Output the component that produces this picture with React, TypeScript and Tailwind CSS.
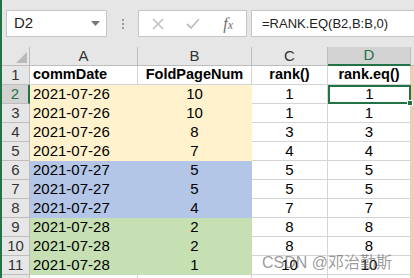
import React from "react";

type Row = { n: number; date: string; b: string; c: string; d: string; fill: string };

const rows: Row[] = [
  { n: 2, date: "2021-07-26", b: "10", c: "1", d: "1", fill: "bg-[#fff2cc] border-[#fff2cc]" },
  { n: 3, date: "2021-07-26", b: "10", c: "1", d: "1", fill: "bg-[#fff2cc] border-[#fff2cc]" },
  { n: 4, date: "2021-07-26", b: "8", c: "3", d: "3", fill: "bg-[#fff2cc] border-[#fff2cc]" },
  { n: 5, date: "2021-07-26", b: "7", c: "4", d: "4", fill: "bg-[#fff2cc] border-[#fff2cc]" },
  { n: 6, date: "2021-07-27", b: "5", c: "5", d: "5", fill: "bg-[#b4c6e7] border-[#b4c6e7]" },
  { n: 7, date: "2021-07-27", b: "5", c: "5", d: "5", fill: "bg-[#b4c6e7] border-[#b4c6e7]" },
  { n: 8, date: "2021-07-27", b: "4", c: "7", d: "7", fill: "bg-[#b4c6e7] border-[#b4c6e7]" },
  { n: 9, date: "2021-07-28", b: "2", c: "8", d: "8", fill: "bg-[#c6e0b4] border-[#c6e0b4]" },
  { n: 10, date: "2021-07-28", b: "2", c: "8", d: "8", fill: "bg-[#c6e0b4] border-[#c6e0b4]" },
  { n: 11, date: "2021-07-28", b: "1", c: "10", d: "10", fill: "bg-[#c6e0b4] border-[#c6e0b4]" },
];

const font = { fontFamily: '"Liberation Sans", Arial, sans-serif' };

export default function App() {
  return (
    <div className="relative flex h-[278px] w-[414px] overflow-hidden bg-white text-black" style={font}>
      <div className="w-[2px] shrink-0 bg-[#217346]" />
      <div className="flex min-w-0 flex-1 flex-col">
        {/* toolbar */}
        <div className="flex h-[47px] shrink-0 items-start gap-0 bg-[#e6e6e6] pt-[10px]">
          <div className="ml-[4px] flex h-[27px] w-[101px] items-center justify-between border border-[#c6c6c6] bg-white pl-[7px] pr-[6px] text-[15px] text-[#222]">
            <span>D2</span>
            <svg width="9" height="5" viewBox="0 0 9 5"><path d="M0 0h9L4.5 5z" fill="#777" /></svg>
          </div>
          <div className="flex h-[27px] w-[31px] flex-col items-center justify-center gap-[2px]">
            <span className="h-[2px] w-[2px] bg-[#9a9a9a]" />
            <span className="h-[2px] w-[2px] bg-[#9a9a9a]" />
            <span className="h-[2px] w-[2px] bg-[#9a9a9a]" />
          </div>
          <div className="flex h-[27px] w-[109px] items-center border border-[#c6c6c6] bg-white">
            <div className="flex w-[38px] justify-center">
              <svg width="12" height="12" viewBox="0 0 12 12"><path d="M1 1l10 10M11 1L1 11" stroke="#c0c0c0" strokeWidth="1.6" /></svg>
            </div>
            <div className="flex w-[34px] justify-center">
              <svg width="14" height="11" viewBox="0 0 14 11"><path d="M1 6l4 4 8-9" stroke="#c0c0c0" strokeWidth="1.8" fill="none" /></svg>
            </div>
            <div className="flex w-[36px] items-baseline justify-center text-[16px] italic text-[#6f6f6f]" style={{ fontFamily: '"Liberation Serif", serif' }}>
              <span>f</span><span className="text-[12px]">x</span>
            </div>
          </div>
          <div className="ml-[4px] flex h-[27px] flex-1 items-center border border-r-0 border-[#c6c6c6] bg-white pl-[10px] text-[13px] text-[#222]">
            =RANK.EQ(B2,B:B,0)
          </div>
        </div>
        {/* grid */}
        <div className="grid grid-cols-[28px_108px_114px_76px_83px_1fr] auto-rows-[19px] text-[15px]">
          {/* column header row */}
          <div className="relative border-b border-r border-[#bdbdbd] bg-[#e6e6e6]">
            <svg className="absolute bottom-[2px] right-[2px]" width="11" height="11" viewBox="0 0 11 11"><path d="M11 0v11H0z" fill="#b9b9b9" /></svg>
          </div>
          <div className="flex items-center justify-center border-b border-r border-[#bdbdbd] bg-[#e6e6e6] text-[#333]">A</div>
          <div className="flex items-center justify-center border-b border-r border-[#bdbdbd] bg-[#e6e6e6] text-[#333]">B</div>
          <div className="flex items-center justify-center border-b border-r border-[#bdbdbd] bg-[#e6e6e6] text-[#333]">C</div>
          <div className="flex items-center justify-center border-b-2 border-r border-b-[#217346] border-r-[#bdbdbd] bg-[#d2d2d2] text-[#217346]">D</div>
          <div className="border-b border-[#bdbdbd] bg-[#e6e6e6]" />

          {/* row 1 */}
          <div className="flex items-center justify-center border-b border-r border-[#bdbdbd] bg-[#e6e6e6] text-[#333]">1</div>
          <div className="flex items-center border-b border-r border-[#d4d4d4] pl-[3px] text-[14.5px] font-bold">commDate</div>
          <div className="flex items-center justify-center border-b border-r border-[#d4d4d4] text-[14.5px] font-bold">FoldPageNum</div>
          <div className="flex items-center justify-center border-b border-r border-[#d4d4d4] text-[14.5px] font-bold">rank()</div>
          <div className="flex items-center justify-center border-b border-r border-[#d4d4d4] text-[14.5px] font-bold whitespace-nowrap">rank.eq()</div>
          <div className="bg-[#f8cbad]" />

          {rows.map((r) => (
            <React.Fragment key={r.n}>
              <div
                className={
                  r.n === 2
                    ? "flex items-center justify-center border-b border-r-2 border-b-[#bdbdbd] border-r-[#217346] bg-[#d2d2d2] text-[#217346]"
                    : "flex items-center justify-center border-b border-r border-[#bdbdbd] bg-[#e6e6e6] text-[#333]"
                }
              >
                {r.n}
              </div>
              <div className={`flex items-center border-b border-r pl-[3px] ${r.fill}`}>{r.date}</div>
              <div className={`flex items-center justify-center border-b border-r ${r.fill}`}>{r.b}</div>
              <div className="flex items-center justify-center border-b border-r border-[#d4d4d4]">{r.c}</div>
              <div
                className={
                  r.n === 2
                    ? "relative flex items-center justify-center border-2 border-[#217346]"
                    : "flex items-center justify-center border-b border-r border-[#d4d4d4]"
                }
              >
                {r.d}
                {r.n === 2 && (
                  <span className="absolute bottom-[-4px] right-[-4px] h-[6px] w-[6px] border border-white bg-[#217346]" />
                )}
              </div>
              <div className="bg-[#f8cbad]" />
            </React.Fragment>
          ))}

          <div className="border-r border-[#bdbdbd] bg-[#e6e6e6]" />
          <div className="border-r border-[#d4d4d4]" />
          <div className="border-r border-[#d4d4d4]" />
          <div className="border-r border-[#d4d4d4]" />
          <div className="border-r border-[#d4d4d4]" />
          <div className="bg-[#f8cbad]" />
        </div>
      </div>
      <div
        className="pointer-events-none absolute left-[262px] top-[251px] text-[16px] text-[#6e6e6e]/70 whitespace-nowrap"
        style={{ fontFamily: '"Liberation Sans", "Noto Sans CJK SC", sans-serif' }}
      >
        CSDN @邓治勤斯
      </div>
    </div>
  );
}
